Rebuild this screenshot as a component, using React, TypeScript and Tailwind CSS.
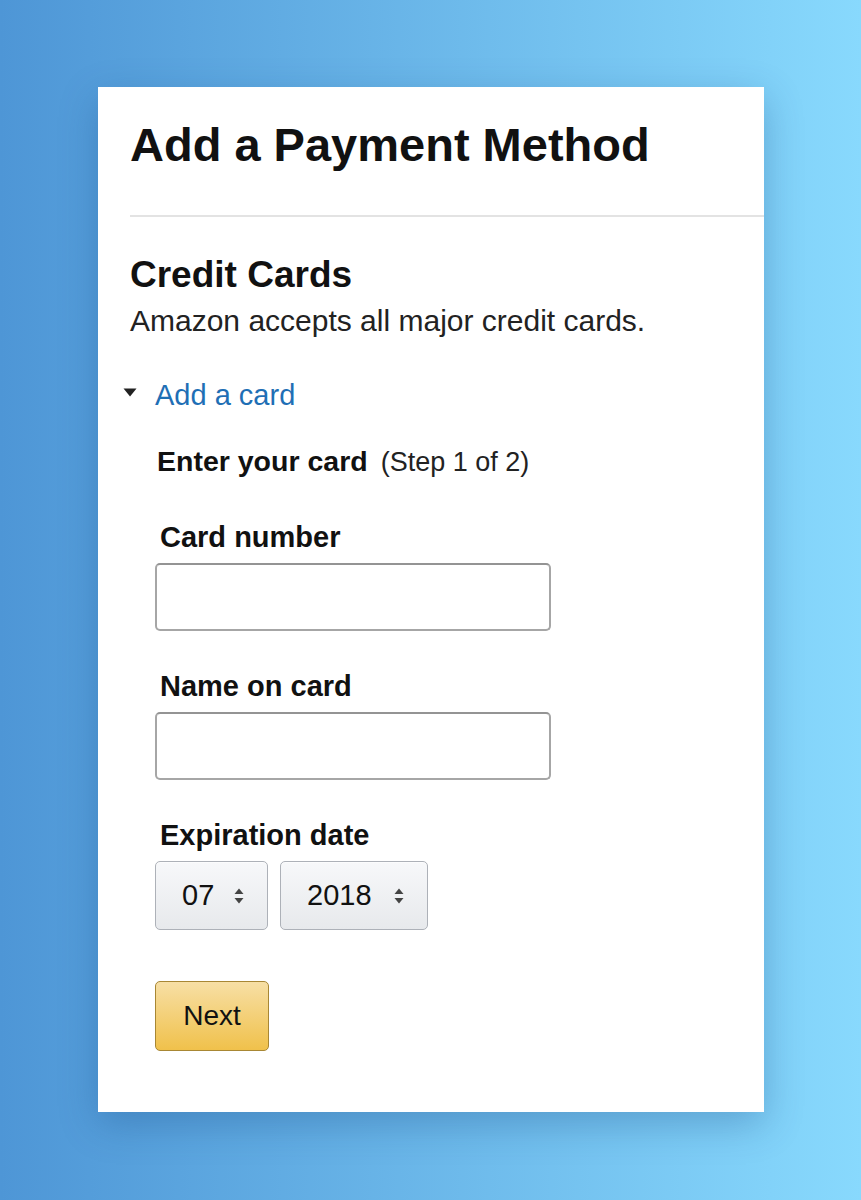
import React from 'react';

const Label: React.FC<{ children: React.ReactNode; className?: string }> = ({ children, className }) => (
  <div className={`pl-[5px] text-[29px] leading-[32px] font-bold text-[#111] ${className ?? ''}`}>{children}</div>
);

const UpDown: React.FC = () => (
  <svg width="10" height="16" viewBox="0 0 10 16" className="shrink-0">
    <path d="M5 0.5 L9.5 6 H0.5 Z" fill="#444" />
    <path d="M5 15.5 L9.5 10 H0.5 Z" fill="#444" />
  </svg>
);

const SelectBox: React.FC<{ value: string; width: string }> = ({ value, width }) => (
  <div
    className={`${width} h-[69px] flex items-center justify-between pl-[26px] pr-[23px] rounded-[5px] border-[1.5px] border-[#adb1b8] bg-[linear-gradient(#f7f8fa,#e7e9ec)] shadow-[0_1px_0_rgba(255,255,255,0.6)_inset]`}
  >
    <span className="text-[29px] text-[#111]">{value}</span>
    <UpDown />
  </div>
);

const App: React.FC = () => {
  return (
    <div className="min-h-[1200px] w-full bg-[linear-gradient(90deg,#4e96d6,#88d9fd)] pt-[87px] pl-[98px] font-['Liberation_Sans',Arial,sans-serif]">
      <div className="w-[666px] bg-white pt-[30px] pb-[61px] pl-[32px] shadow-[0_12px_36px_rgba(20,70,130,0.3)]">
        <h1 className="text-[47px] leading-[56px] font-bold text-[#111]">Add a Payment Method</h1>
        <div className="mt-[42px] h-[2px] bg-[#e3e3e3]" />

        <h2 className="mt-[36px] text-[37px] leading-[44px] font-bold text-[#111]">Credit Cards</h2>
        <p className="mt-[6px] text-[30px] leading-[36px] text-[#222]">Amazon accepts all major credit cards.</p>

        <div className="mt-[38px] flex items-center gap-[18px] -ml-[7px]">
          <svg width="14" height="9" viewBox="0 0 14 9" className="mt-[-6px]">
            <path d="M0.5 0.5 H13.5 L7 8.5 Z" fill="#222" />
          </svg>
          <a href="#add" className="text-[29px] leading-[36px] text-[#1f6fb5]">
            Add a card
          </a>
        </div>

        <div className="pl-[25px]">
          <div className="mt-[32px] flex items-baseline gap-[13px] leading-[32px]">
            <span className="ml-[2px] text-[28.5px] font-bold text-[#111]">Enter your card</span>
            <span className="text-[27px] text-[#222]">(Step 1 of 2)</span>
          </div>

          <Label className="mt-[43px]">Card number</Label>
          <input
            type="text"
            className="mt-[10px] block w-[396px] h-[68px] rounded-[5px] border-2 border-[#a6a6a6] border-t-[#949494] bg-white outline-none"
          />

          <Label className="mt-[39px]">Name on card</Label>
          <input
            type="text"
            className="mt-[10px] block w-[396px] h-[68px] rounded-[5px] border-2 border-[#a6a6a6] border-t-[#949494] bg-white outline-none"
          />

          <Label className="mt-[39px]">Expiration date</Label>
          <div className="mt-[10px] flex gap-[12px]">
            <SelectBox value="07" width="w-[113px]" />
            <SelectBox value="2018" width="w-[148px]" />
          </div>

          <button
            type="button"
            className="mt-[51px] w-[114px] h-[70px] rounded-[5px] border-[1.5px] border-[#a88734] bg-[linear-gradient(#f7dfa5,#f0c14b)] text-[28px] text-[#111]"
          >
            Next
          </button>
        </div>
      </div>
    </div>
  );
};

export default App;
